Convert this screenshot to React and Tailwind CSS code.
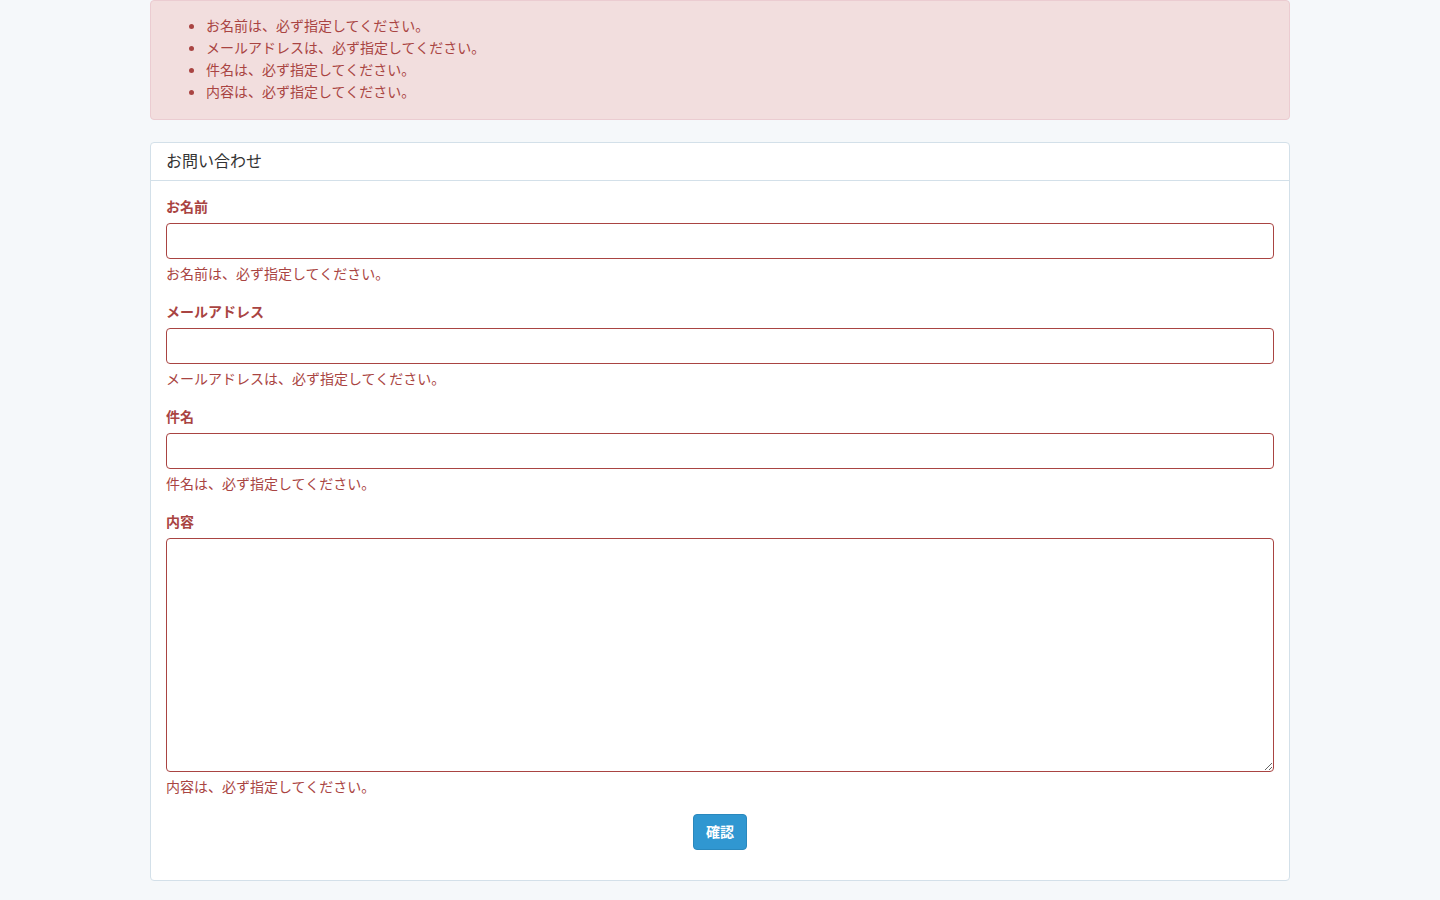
import React from 'react';

const fields = [
  { label: 'お名前', type: 'input', error: 'お名前は、必ず指定してください。' },
  { label: 'メールアドレス', type: 'input', error: 'メールアドレスは、必ず指定してください。' },
  { label: '件名', type: 'input', error: '件名は、必ず指定してください。' },
  { label: '内容', type: 'textarea', error: '内容は、必ず指定してください。' },
];

const App = () => {
  return (
    <div
      className="min-h-screen bg-[#f5f8fa] text-[14px] leading-[22px] text-[#636b6f]"
      style={{ fontFamily: '"Noto Sans CJK JP", "Noto Sans", sans-serif' }}
    >
      <div className="mx-auto w-[1140px]">
        {/* Error summary */}
        <div className="mb-[22px] rounded-[4px] border border-[#ebccd1] bg-[#f2dede] px-[15px] pt-[13px] pb-[17px] text-[#a94442]">
          <ul className="list-disc pl-[40px] marker:text-[#a94442]">
            {fields.map((f) => (
              <li key={f.label}>{f.error}</li>
            ))}
          </ul>
        </div>

        {/* Contact panel */}
        <div className="mb-[22px] rounded-[4px] border border-[#d3e0e9] bg-white">
          <div className="flex h-[38px] items-center border-b border-[#d3e0e9] px-[15px] pb-[3px] text-[16px] text-[#333]">
            お問い合わせ
          </div>
          <form className="p-[15px]" onSubmit={(e) => e.preventDefault()}>
            {fields.map((f) => (
              <div key={f.label} className="mb-[15px]">
                <label className="mb-[7px] block leading-[20px] font-bold text-[#a94442]">{f.label}</label>
                {f.type === 'input' ? (
                  <input
                    type="text"
                    className="block h-[36px] w-full rounded-[4px] border border-[#a94442] bg-white px-[12px] outline-none"
                  />
                ) : (
                  <textarea className="block h-[234px] w-full rounded-[4px] border border-[#a94442] bg-white px-[12px] py-[6px] outline-none" />
                )}
                <p className="mt-[3px] pb-[2px] text-[#a94442]">{f.error}</p>
              </div>
            ))}
            <div className="mb-[15px] flex justify-center">
              <button
                type="submit"
                className="h-[36px] rounded-[4px] border border-[#2a88bd] bg-[#3097d1] px-[12px] pb-[2px] font-bold text-white"
              >
                確認
              </button>
            </div>
          </form>
        </div>
      </div>
    </div>
  );
};

export default App;
